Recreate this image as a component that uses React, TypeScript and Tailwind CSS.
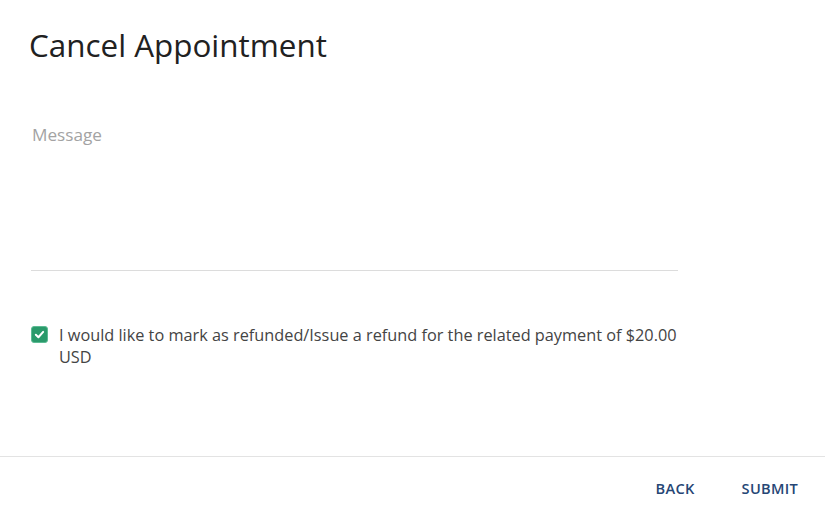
import { useState } from "react";

export default function App() {
  const [message, setMessage] = useState("");
  const [refund, setRefund] = useState(true);

  return (
    <div
      className="flex h-[512px] w-[825px] flex-col bg-white"
      style={{ fontFamily: '"Open Sans", sans-serif' }}
    >
      <div className="flex-1 pl-[29px] pr-[140px]">
        <h1 className="pt-[25px] text-[31.4px] leading-[40px] text-[#212121]">
          Cancel Appointment
        </h1>

        <textarea
          value={message}
          onChange={(e) => setMessage(e.target.value)}
          placeholder="Message"
          className="mt-[58px] ml-[2px] block h-[148px] w-[647px] resize-none border-b border-[#dcdcdc] px-[1px] text-[17.2px] leading-6 text-[#333] outline-none placeholder:text-[#a3a3a3]"
        />

        <label className="mt-[53px] ml-[2px] flex cursor-pointer items-start gap-[11px]">
          <button
            type="button"
            onClick={() => setRefund(!refund)}
            className={`mt-[2px] flex h-[17px] w-[17px] shrink-0 items-center justify-center rounded-[3px] border ${
              refund
                ? "border-[#5cbb93] bg-[#2a9a6b]"
                : "border-[#999] bg-white"
            }`}
          >
            {refund && (
              <svg width="11" height="11" viewBox="0 0 12 12" fill="none">
                <path
                  d="M2 6.3 L4.8 9 L10 3.2"
                  stroke="white"
                  strokeWidth="2.2"
                  strokeLinecap="round"
                  strokeLinejoin="round"
                />
              </svg>
            )}
          </button>
          <span className="w-[620px] text-[16.3px] leading-[22px] text-[#444]">
            I would like to mark as refunded/Issue a refund for the related
            payment of $20.00 USD
          </span>
        </label>
      </div>

      <div className="flex h-[56px] items-center justify-end gap-[47px] border-t border-[#e3e3e3] pt-[9px] pr-[27px]">
        <button className="text-[14.6px] font-semibold tracking-[0.3px] text-[#264675]">
          BACK
        </button>
        <button className="text-[14.6px] font-semibold tracking-[0.3px] text-[#264675]">
          SUBMIT
        </button>
      </div>
    </div>
  );
}
